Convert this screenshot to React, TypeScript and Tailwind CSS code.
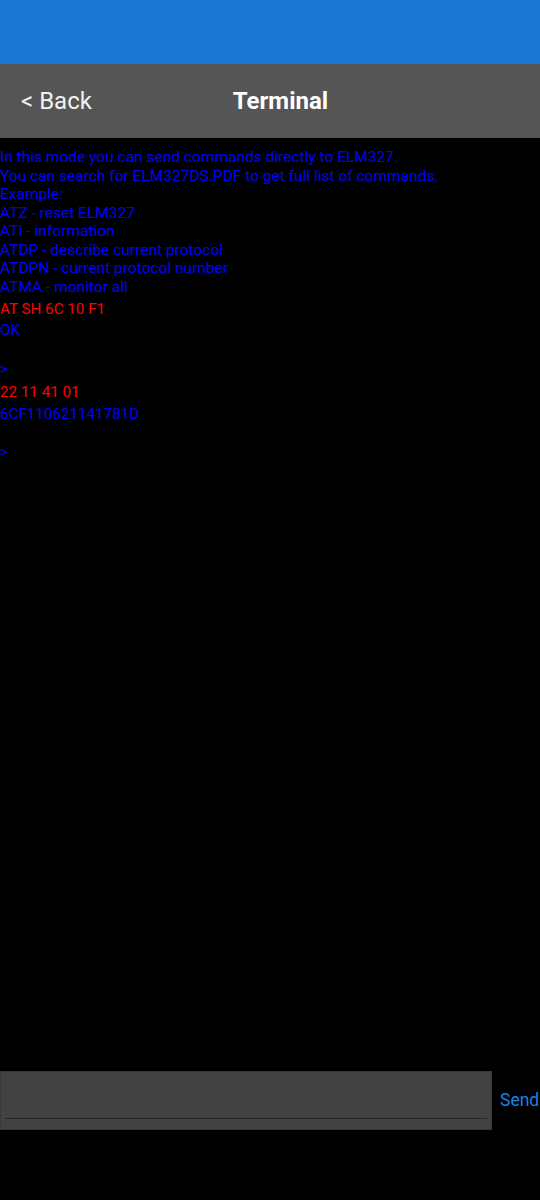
import React from "react";

const intro = [
  "In this mode you can send commands directly to ELM327.",
  "You can search for ELM327DS.PDF to get full list of commands.",
  "Example:",
  "ATZ - reset ELM327",
  "ATI - information",
  "ATDP - describe current protocol",
  "ATDPN - current protocol number",
  "ATMA - monitor all",
];

type L = { t: string; red?: boolean };
const resp: L[] = [
  { t: "AT SH 6C 10 F1", red: true },
  { t: "OK" },
  { t: "" },
  { t: ">" },
  { t: "22 11 41 01", red: true },
  { t: "6CF110621141781D" },
  { t: "" },
  { t: ">" },
];

export default function App() {
  return (
    <div
      className="w-[540px] h-[1200px] bg-black flex flex-col pb-[70px]"
      style={{ fontFamily: "Roboto, 'Noto Sans', sans-serif" }}
    >
      <div className="h-[64px] bg-[#1976d2] shrink-0" />
      <div className="h-[74px] bg-[#555555] shrink-0 flex items-center pl-[21px] pr-[120px]">
        <div className="w-[120px] text-[24px] text-[#f2f2f2] leading-none">&lt; Back</div>
        <div className="flex-1 text-center text-[24px] font-bold text-white leading-none">Terminal</div>
      </div>
      <div className="flex-1 pt-[10px]">
        {intro.map((t, i) => (
          <div key={i} className="h-[18.5px] leading-[18.5px] text-[15.5px] text-[#0000ff] whitespace-pre">
            {t}
          </div>
        ))}
        {resp.map((l, i) =>
          l.red ? (
            <div key={i} className="mt-[4px] mb-[2.3px] h-[19.2px] leading-[19.2px] text-[15.2px] text-[#ff0000] whitespace-pre">
              {l.t}
            </div>
          ) : (
            <div key={i} className="h-[19.2px] leading-[19.2px] text-[15.2px] text-[#0000ff] whitespace-pre">
              {l.t}
            </div>
          )
        )}
      </div>
      <div className="h-[59px] shrink-0 flex items-center">
        <div className="w-[492px] h-full bg-[#424242] border border-[#383838] flex flex-col justify-end px-[4px] pb-[10px]">
          <div className="h-[1.5px] bg-[#262626]" />
        </div>
        <div className="pl-[8px] text-[17.5px] text-[#1a80e6] leading-none whitespace-nowrap">Send</div>
      </div>
    </div>
  );
}
